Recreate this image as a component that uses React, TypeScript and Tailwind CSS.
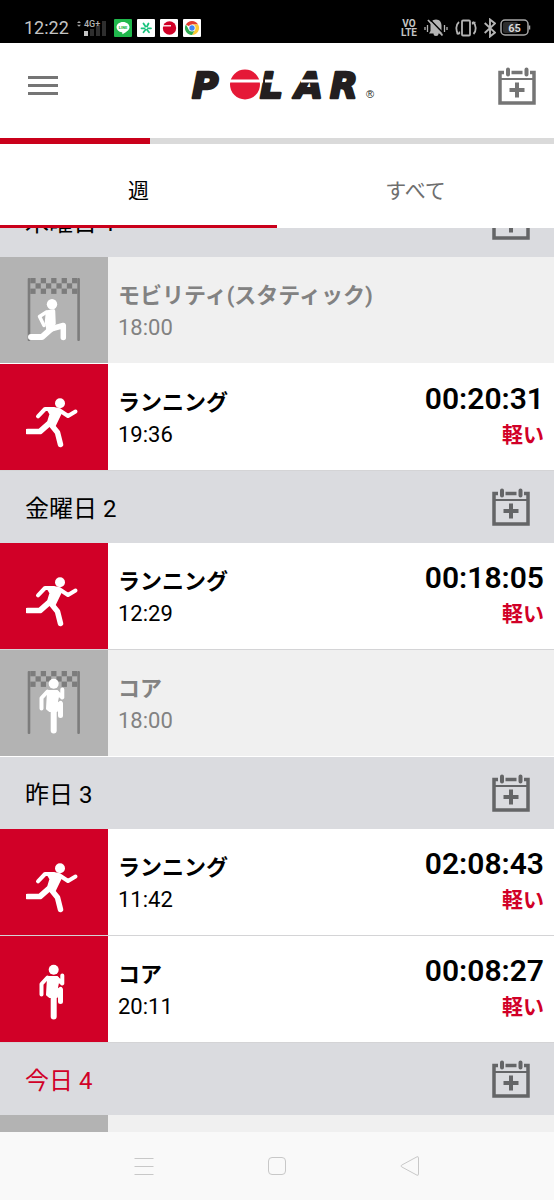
import { useState } from "react";
import clsx from "clsx";

type Sport = "running" | "core" | "mobility";

interface Training {
  sport: Sport;
  name: string;
  time: string;
  duration?: string;
  effort?: string;
}

interface Day {
  label: string;
  isToday?: boolean;
  trainings: Training[];
}

const days: Day[] = [
  {
    label: "木曜日 1",
    trainings: [
      { sport: "mobility", name: "モビリティ(スタティック)", time: "18:00" },
      { sport: "running", name: "ランニング", time: "19:36", duration: "00:20:31", effort: "軽い" },
    ],
  },
  {
    label: "金曜日 2",
    trainings: [
      { sport: "running", name: "ランニング", time: "12:29", duration: "00:18:05", effort: "軽い" },
      { sport: "core", name: "コア", time: "18:00" },
    ],
  },
  {
    label: "昨日 3",
    trainings: [
      { sport: "running", name: "ランニング", time: "11:42", duration: "02:08:43", effort: "軽い" },
      { sport: "core", name: "コア", time: "20:11", duration: "00:08:27", effort: "軽い" },
    ],
  },
  {
    label: "今日 4",
    isToday: true,
    trainings: [],
  },
];

function StatusBar() {
  return (
    <div className="flex h-[43px] shrink-0 items-center bg-black pt-3 pr-[22px] pl-6 text-[#c4c4c4]">
      <span className="w-[52px] text-[18px] leading-6">12:22</span>

      {/* Signal */}
      <svg width="32" height="22" viewBox="0 -2 32 22" className="mr-1.5 shrink-0">
        <path d="M1 4L3 2l2 2zM1 5.800L3 7.800 5 5.800z" fill="#a8a8a8" />
        <rect x="14" y="10" width="4" height="7" fill="#2e2e2e" />
        <rect x="20" y="6" width="4" height="11" fill="#2e2e2e" />
        <rect x="26" y="2" width="4" height="15" fill="#2e2e2e" />
        <rect x="8" y="12" width="4" height="5" fill="#c4c4c4" />
        <text x="8" y="8" fontSize="9" fontWeight="500" fill="#b4b4b4">4G+</text>
      </svg>

      {/* Notifications */}
      <div className="flex gap-[5px]">
        <svg width="18" height="18" viewBox="0 0 18 18">
          <rect width="18" height="18" rx="1" fill="#20b84c" />
          <path d="M9 3c-3.800 0-6.500 2.400-6.500 5.200 0 2.600 2.200 4.600 5.300 5.100.8.100.6.900.5 1.900 2.800-1.400 7.200-4 7.200-7C15.500 5.400 12.800 3 9 3z" fill="#fff" />
          <text x="9" y="10" textAnchor="middle" fontSize="4" fontWeight="900" fill="#20b84c">LINE</text>
        </svg>
        <svg width="18" height="18" viewBox="0 0 18 18">
          <rect width="18" height="18" rx="1" fill="#fff" />
          <g stroke="#19c37d" strokeWidth="1.800" strokeLinecap="round">
            <path d="M8.500 7.500L6.500 4.500M10 7.500l1.500-3M11 9.300h3M7.500 9.300h-3M10 10.800l2 2.500M8.500 10.800l-2 2.500" />
          </g>
        </svg>
        <svg width="18" height="18" viewBox="0 0 18 18">
          <rect width="18" height="18" rx="1" fill="#fff" />
          <circle cx="9.500" cy="9" r="6.700" fill="#d10027" />
          <path d="M2 6.800h9" stroke="#fff" strokeWidth="1.300" />
        </svg>
        <svg width="18" height="18" viewBox="0 0 18 18">
          <rect width="18" height="18" rx="1" fill="#fff" />
          <path d="M9 9L2.900 5.500A7 7 0 0 1 15.100 5.500H9z" fill="#e33b2e" />
          <path d="M9 5.500h6.100A7 7 0 0 1 9 16l3-5.300z" fill="#fcc934" />
          <path d="M9 9l3 1.700L9 16A7 7 0 0 1 2.900 5.500L6 10.700z" fill="#2da94f" />
          <circle cx="9" cy="9" r="3.500" fill="#fff" />
          <circle cx="9" cy="9" r="2.700" fill="#4285f4" />
        </svg>
      </div>

      {/* System icons */}
      <div className="ml-auto flex items-center gap-[7px]">
        <div className="text-center text-[10px] leading-[9px] font-bold">
          VO
          <br />
          LTE
        </div>
        <svg width="24" height="18" viewBox="0 0 24 18" fill="none">
          <path d="M12 0.500c-3.800 0-5.500 2.800-5.500 6V12L5 14.500h4.500a2.500 2.500 0 0 0 5 0H19L17.500 12V6.500c0-3.200-1.700-6-5.500-6z" fill="#b4b4b4" />
          <path d="M5.500 0L20.500 15.500" stroke="#000" strokeWidth="1.500" />
          <path d="M4 1L18.500 16.500" stroke="#b4b4b4" strokeWidth="1.800" />
          <path d="M1 8v3M3.500 6v7M20.500 6v7M23 8v3" stroke="#b4b4b4" strokeWidth="1.300" />
        </svg>
        <svg width="22" height="18" viewBox="0 0 22 18" fill="none" stroke="#b4b4b4" strokeWidth="1.800">
          <rect x="7" y="1.500" width="8" height="15" rx="1" />
          <path d="M4 3C0.500 6 0.500 12 3.500 15.500M18 3c3.500 3 3.500 9 0.500 12" />
          <path d="M1.500 14.500h3v-2M20.500 3.500h-3v2" strokeWidth="1.300" />
        </svg>
        <svg width="12" height="20" viewBox="0 0 12 20" fill="none" stroke="#b4b4b4" strokeWidth="1.900">
          <path d="M0.700 5L11 14.500 6 18.500V1.500L11 5.500 0.700 15" />
        </svg>
        <svg width="32" height="17" viewBox="0 0 32 17" className="-ml-[3px]">
          <rect x="1" y="1" width="27" height="15" rx="4" fill="none" stroke="#a8a8a8" strokeWidth="1.500" />
          <rect x="3" y="3" width="15" height="11" rx="2" fill="#2e2e2e" />
          <path d="M29.500 6.500v4" stroke="#a8a8a8" strokeWidth="1.500" />
          <text x="14.500" y="12.500" textAnchor="middle" fontSize="11" fontWeight="700" fill="#d8d8d8">65</text>
        </svg>
      </div>
    </div>
  );
}

function PolarLogo() {
  return (
    <svg width="186" height="49" viewBox="0 -8 186 49" role="img" aria-label="Polar">
      <g
        fill="#231f20"
        stroke="#231f20"
        strokeWidth="2.500"
        strokeLinejoin="round"
        fontFamily="'DejaVu Sans', sans-serif"
        fontSize="36"
        fontWeight="700"
        fontStyle="italic"
      >
        <text x="3" y="29">P</text>
        <text x="71" y="29">L</text>
        <text x="106" y="29">A</text>
        <text x="141" y="29">R</text>
      </g>
      <circle cx="56" cy="15.500" r="15" fill="#e51937" />
      <path d="M38 12h36M76 12h24M112 12h24" stroke="#fff" strokeWidth="3" />
      <text x="177" y="29" fontSize="11" fill="#231f20" fontFamily="'Liberation Sans', sans-serif">®</text>
    </svg>
  );
}

function CalendarAddIcon({ className }: { className?: string }) {
  return (
    <svg width="38" height="38" viewBox="0 0 38 38" fill="none" stroke="currentColor" className={className}>
      <path d="M6 5.500H2V36h34V5.500h-4" strokeWidth="3.500" />
      <path d="M13.500 5.500h11" strokeWidth="3.500" />
      <path d="M2 12h34" strokeWidth="2" />
      <path d="M10 2.500v5M28.500 2.500v5" strokeWidth="4" strokeLinecap="round" />
      <path d="M19 15.500v15M11.500 23h15" strokeWidth="4" />
    </svg>
  );
}

/* Checkered finish line behind planned trainings */
function FinishGate() {
  return (
    <g fill="#7c7c7c">
      <rect x="1.700" width="2.600" height="63" rx="1" />
      <rect x="51.300" width="2.600" height="63" rx="1" />
      {[0, 1, 2].map((row) =>
        [0, 1, 2, 3, 4, 5, 6, 7, 8]
          .filter((col) => (row + col) % 2 === 0)
          .map((col) => (
            <rect key={`${row}-${col}`} x={4.3 + col * 5.22} y={row * 5.3} width="5.300" height="5.300" />
          ))
      )}
    </g>
  );
}

function SportIcon({ sport, planned }: { sport: Sport; planned: boolean }) {
  return (
    <svg width="56" height="64" viewBox="0 0 56 64" aria-hidden="true">
      {planned && <FinishGate />}
      <g fill="none" stroke="#fff" strokeLinecap="round" strokeLinejoin="round">
        {sport === "running" && (
          <>
            <circle cx="34" cy="18.300" r="5" fill="#fff" stroke="none" />
            <path d="M22 24h9.500l3 3.500-6 12.500-6.500-1 3-10z" fill="#fff" strokeWidth="3" />
            <path d="M12 31.300L19 24h9M33 25l9 6 7.500-4.500" strokeWidth="4" />
            <path d="M1.800 46.500H14l8.500-7.500" strokeWidth="5.700" />
            <path d="M25 39.500l6.500 8 3 12" strokeWidth="5.500" />
          </>
        )}
        {sport === "core" && (
          <>
            <circle cx="27.700" cy="12.700" r="5" fill="#fff" stroke="none" />
            <path d="M22.500 20.500h8.500l1 3-1.500 7v9h-6.500l-2.500-2z" fill="#fff" strokeWidth="3" />
            <path d="M21.500 20.500l-6 6.500v10.500" strokeWidth="4" />
            <path d="M31 21.500l5.300 5V18.500" strokeWidth="4" />
            <path d="M27.700 36v23.500" strokeWidth="6" />
            <path d="M30 36l4.500-3.500v12" strokeWidth="5" />
          </>
        )}
        {sport === "mobility" && (
          <>
            <circle cx="26" cy="26.300" r="5.200" fill="#fff" stroke="none" />
            <path d="M21.500 34l6-1 .5 12.500-6 5-1.500-6z" fill="#fff" strokeWidth="3.500" />
            <path d="M20.500 34l-7 4.500 4.500 9" strokeWidth="3.500" />
            <path d="M5 59h11l9-8" strokeWidth="6" />
            <path d="M23 51.500l14.300-4v12" strokeWidth="5.500" />
          </>
        )}
      </g>
    </svg>
  );
}

function TrainingRow({ training }: { training: Training }) {
  const planned = !training.duration;

  return (
    <li
      className={clsx(
        "flex h-[107px] border-b",
        planned ? "border-white bg-[#f0f0f0] text-[#828282]" : "border-[#d4d4d6] bg-white text-black"
      )}
    >
      <div
        className={clsx(
          "flex w-[108px] shrink-0 items-center justify-center",
          planned ? "bg-[#b3b3b3]" : "bg-[#d10027]"
        )}
      >
        <SportIcon sport={training.sport} planned={planned} />
      </div>
      <div className="flex min-w-0 flex-1 flex-col justify-center pt-1 pl-[10px] text-[22px] leading-8">
        <h3 className="font-bold">{training.name}</h3>
        <p>{training.time}</p>
      </div>
      {!planned && (
        <div className="flex flex-col justify-center pr-[10px] text-right leading-9">
          <p className="text-[30px] font-semibold">{training.duration}</p>
          <p className="text-[21px] font-bold text-[#d10027]">{training.effort}</p>
        </div>
      )}
    </li>
  );
}

export default function App() {
  const [tab, setTab] = useState<"week" | "all">("week");

  return (
    <div className="flex h-screen flex-col overflow-hidden bg-white font-[Roboto,'Noto_Sans_CJK_JP',sans-serif]">
      <StatusBar />

      {/* Header */}
      <header className="flex h-[95px] shrink-0 items-center justify-between pr-[18px] pb-[10px] pl-7">
        <button type="button" aria-label="メニュー" className="flex w-[38px] flex-col gap-[5px]">
          <span className="h-[3px] w-[30px] bg-[#757575]" />
          <span className="h-[3px] w-[30px] bg-[#757575]" />
          <span className="h-[3px] w-[30px] bg-[#757575]" />
        </button>
        <PolarLogo />
        <button type="button" aria-label="トレーニングを追加">
          <CalendarAddIcon className="text-[#757575]" />
        </button>
      </header>

      <div className="h-[6px] shrink-0 bg-[#dadada]">
        <div className="h-full w-[27%] bg-[#ca001b]" />
      </div>

      {/* Tabs */}
      <div role="tablist" className="grid h-[84px] shrink-0 grid-cols-2 text-[21px]">
        <button
          type="button"
          role="tab"
          aria-selected={tab === "week"}
          onClick={() => setTab("week")}
          className={clsx(
            "border-b-[3px] pt-[14px]",
            tab === "week" ? "border-[#ca001b] text-black" : "border-transparent text-[#6e6e6e]"
          )}
        >
          週
        </button>
        <button
          type="button"
          role="tab"
          aria-selected={tab === "all"}
          onClick={() => setTab("all")}
          className={clsx(
            "border-b-[3px] pt-[14px]",
            tab === "all" ? "border-[#ca001b] text-black" : "border-transparent text-[#6e6e6e]"
          )}
        >
          すべて
        </button>
      </div>

      {/* Diary, scrolled a little past the first day */}
      <main className="min-h-0 flex-1 overflow-hidden bg-[#f0f0f0]">
        <div className="-mt-[43px]">
          {days.map((day) => (
            <section key={day.label}>
              <div className="flex h-[72px] items-center justify-between bg-[#dadbdf] pr-6 pl-[25px]">
                <h2 className={clsx("pt-1 text-[24px]", day.isToday ? "text-[#d10027]" : "text-black")}>
                  {day.label}
                </h2>
                <button type="button" aria-label={`${day.label} に追加`}>
                  <CalendarAddIcon className="text-[#646567]" />
                </button>
              </div>
              <ul>
                {day.trainings.map((training) => (
                  <TrainingRow key={training.time} training={training} />
                ))}
              </ul>
            </section>
          ))}
          <div className="h-[107px] w-[108px] bg-[#b3b3b3]" />
        </div>
      </main>

      {/* System navigation */}
      <nav className="flex h-[68px] shrink-0 items-center bg-[#f9f9f9] px-[14%] text-[#c8c8c8]">
        <button type="button" aria-label="最近" className="flex flex-1 justify-center">
          <svg width="20" height="20" viewBox="0 0 20 20" stroke="currentColor">
            <path d="M0.500 2.500h19M0.500 10.500h19M0.500 18.500h19" />
          </svg>
        </button>
        <button type="button" aria-label="ホーム" className="flex flex-1 justify-center">
          <svg width="20" height="20" viewBox="0 0 20 20" fill="none" stroke="currentColor">
            <rect x="1.500" y="1.500" width="17" height="17" rx="3.500" />
          </svg>
        </button>
        <button type="button" aria-label="戻る" className="flex flex-1 justify-center">
          <svg width="20" height="20" viewBox="0 0 20 20" fill="none" stroke="currentColor" strokeLinejoin="round">
            <path d="M1.500 9.200L17 0.800q1.500-.5 1.500 1v16.400q0 1.500-1.500 1L1.500 10.800q-1-.8 0-1.600z" />
          </svg>
        </button>
      </nav>
    </div>
  );
}
